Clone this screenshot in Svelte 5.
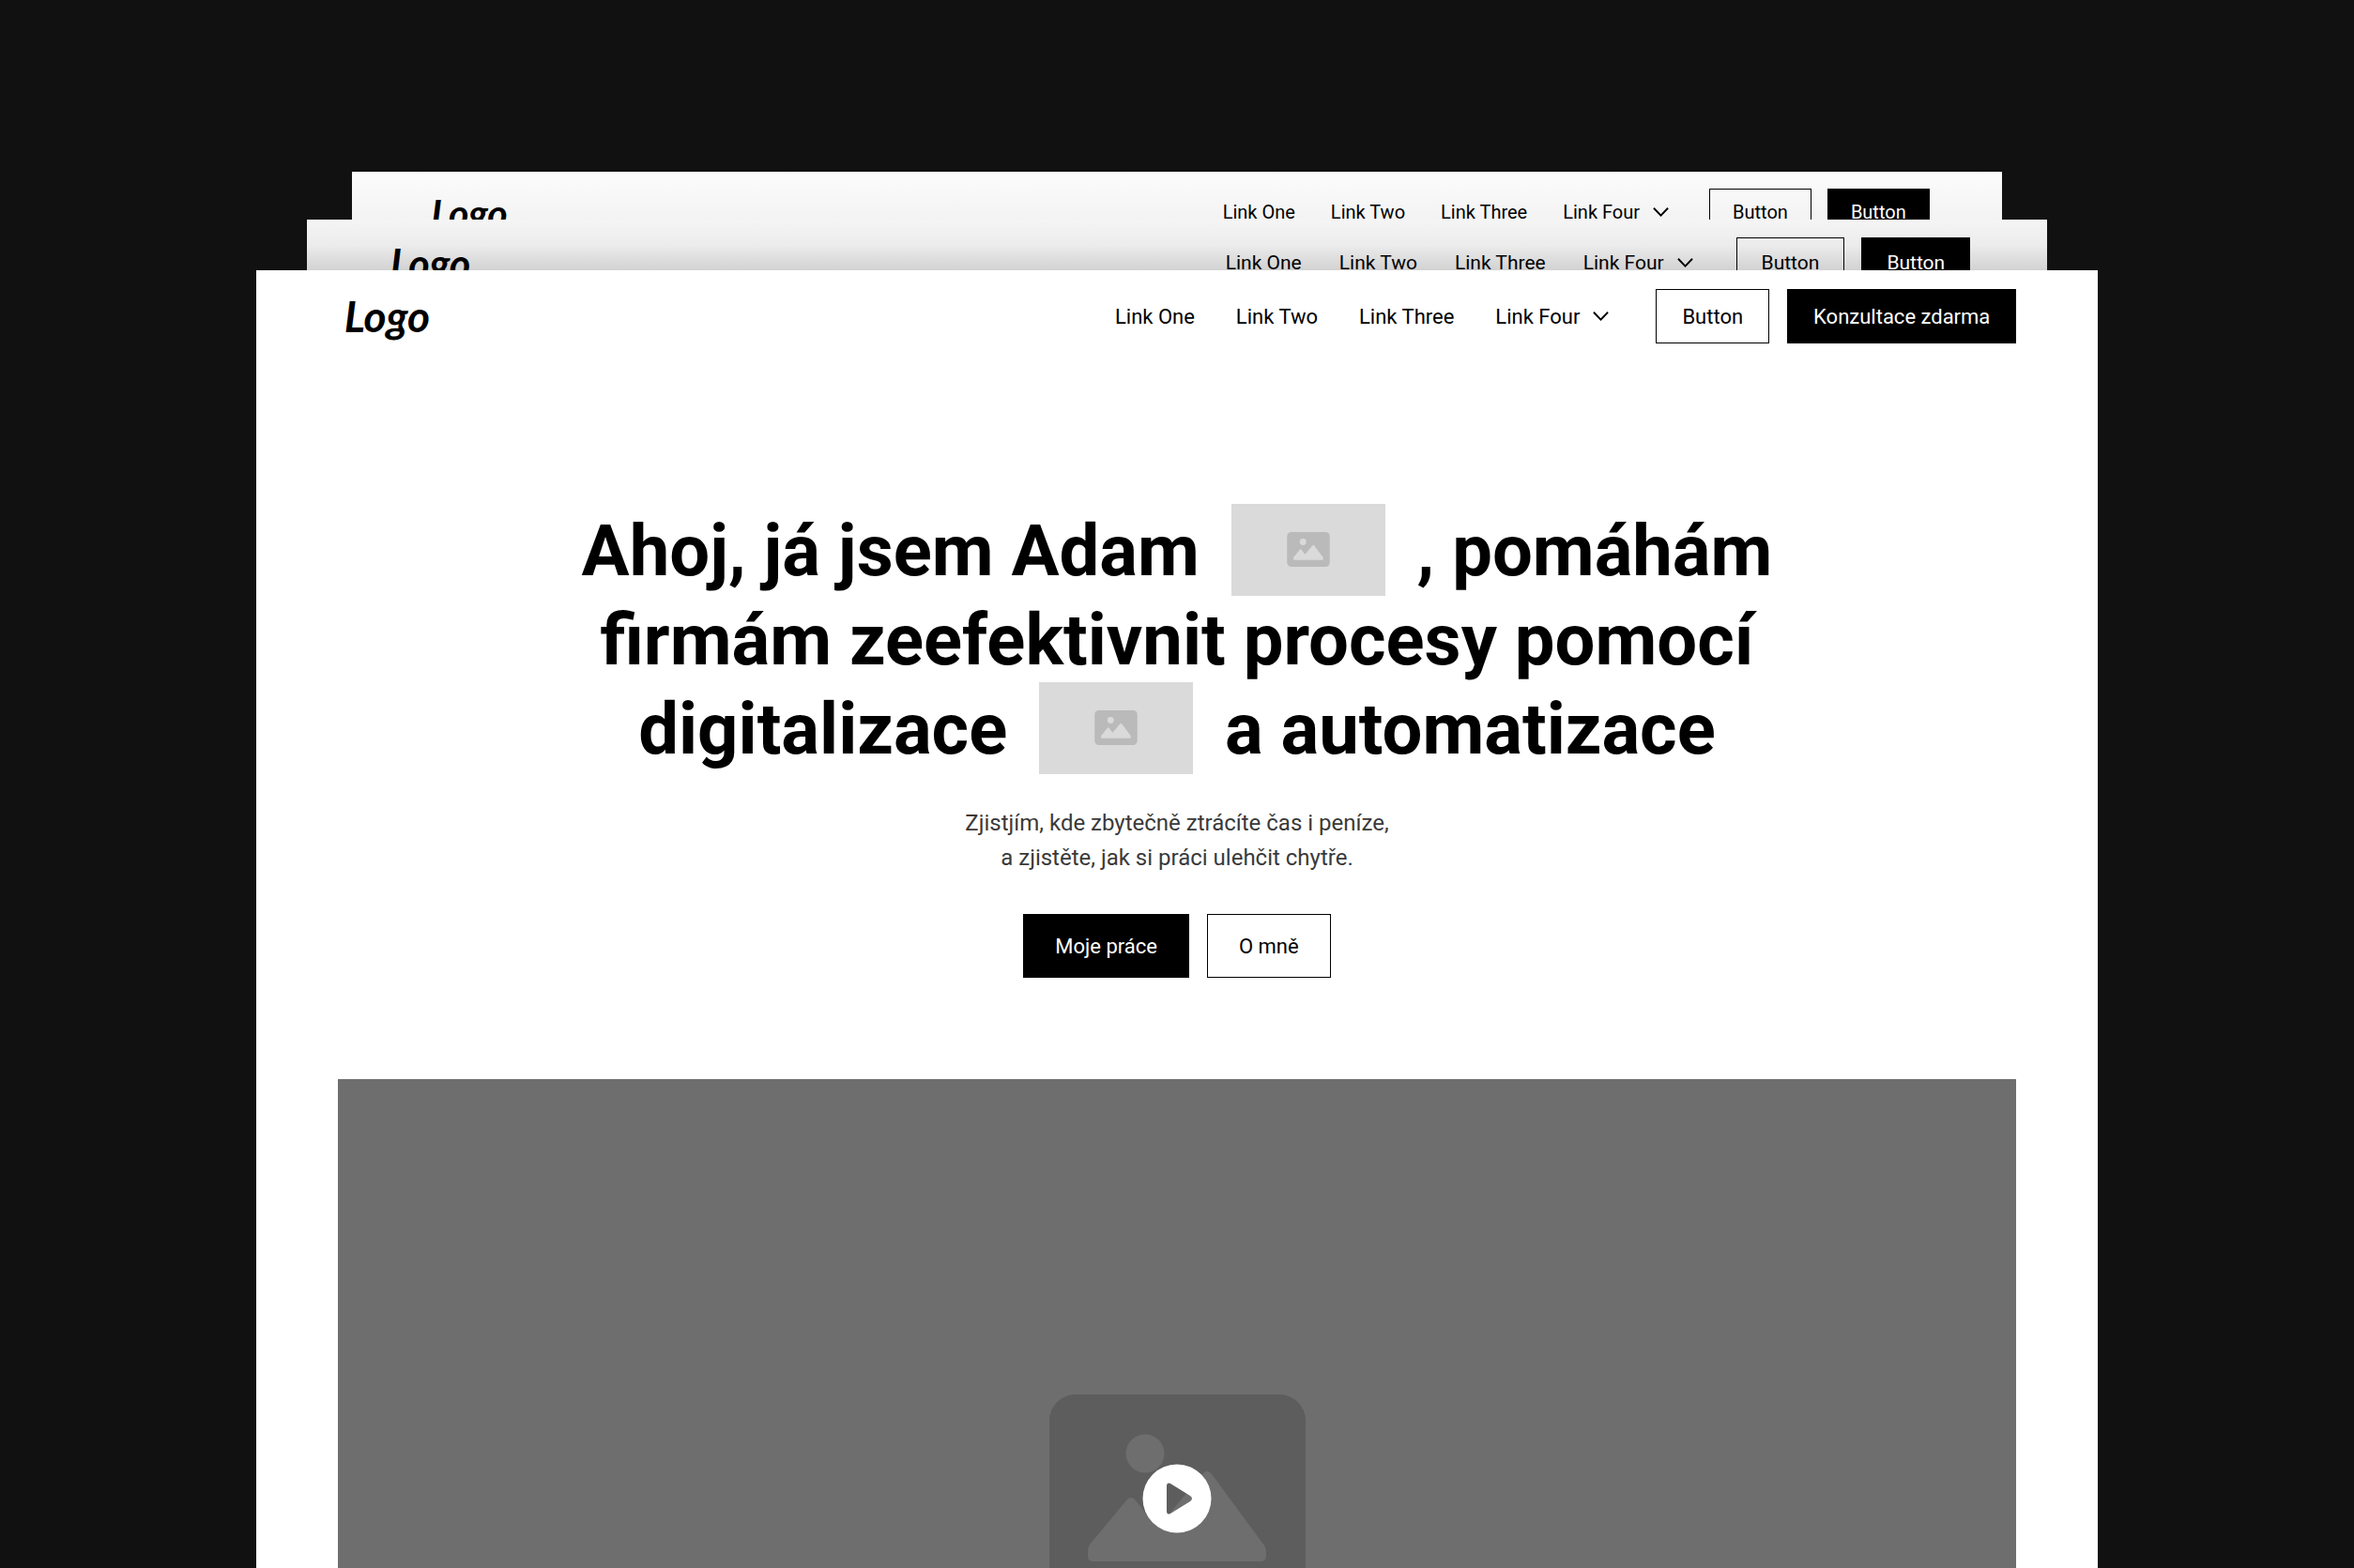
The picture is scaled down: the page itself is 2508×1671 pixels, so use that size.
<script>
    const links = ['Link One', 'Link Two', 'Link Three'];

    const backSheets = [
        { name: 'sheet-back', action: 'Button' },
        { name: 'sheet-middle', action: 'Button' }
    ];
</script>

{#snippet navbar(action)}
    <header class="navbar">
        <a href="#home" class="logo">Logo</a>

        <div class="navbar-menu">
            <nav class="nav-links">
                {#each links as link}
                    <a href="#link" class="nav-link">{link}</a>
                {/each}
                <button type="button" class="nav-link nav-dropdown">
                    Link Four
                    <svg class="chevron" viewBox="0 0 18 12" fill="none" aria-hidden="true">
                        <path d="M1 1.5 L9 9.8 L17 1.5" stroke="currentColor" stroke-width="2" />
                    </svg>
                </button>
            </nav>

            <div class="nav-actions">
                <button type="button" class="button">Button</button>
                <button type="button" class="button button-primary">{action}</button>
            </div>
        </div>
    </header>
{/snippet}

{#snippet placeholder()}
    <svg viewBox="0 0 273 222" aria-hidden="true">
        <rect class="frame" width="273" height="222" rx="28" />
        <circle class="shape" cx="102" cy="63" r="20.5" />
        <path
            class="shape"
            d="M41 166 Q41 163 43 160 L82 113 Q87 107 92 113 L112 139 Q115 143 118 139 L163 85 Q168 79 173 85 L229 161 Q231 164 231 167 V172 Q231 178 225 178 H47 Q41 178 41 172 Z"
        />
    </svg>
{/snippet}

<div class="page">
    {#each backSheets as sheet}
        <div class="sheet {sheet.name}">
            {@render navbar(sheet.action)}
        </div>
    {/each}

    <div class="sheet sheet-front">
        {@render navbar('Konzultace zdarma')}

        <main class="hero">
            <h1 class="hero-title">
                Ahoj, já jsem Adam <span class="inline-image">{@render placeholder()}</span> , pomáhám<br />
                firmám zeefektivnit procesy pomocí<br />
                digitalizace <span class="inline-image">{@render placeholder()}</span> a automatizace
            </h1>

            <p class="hero-text">
                Zjistjím, kde zbytečně ztrácíte čas i peníze,<br />
                a zjistěte, jak si práci ulehčit chytře.
            </p>

            <div class="hero-actions">
                <button type="button" class="button button-primary">Moje práce</button>
                <button type="button" class="button">O mně</button>
            </div>

            <div class="video">
                <div class="video-image">{@render placeholder()}</div>
                <button type="button" class="play" aria-label="Play video">
                    <svg viewBox="0 0 74 74" aria-hidden="true">
                        <path
                            fill="#fff"
                            fill-rule="evenodd"
                            d="M37 0.5 A36.5 36.5 0 1 1 37 73.5 A36.5 36.5 0 1 1 37 0.5 Z M26 24 V50 Q26 55 30 53 L51 40 Q55 37 51 34 L30 21 Q26 19 26 24 Z"
                        />
                    </svg>
                </button>
            </div>
        </main>
    </div>
</div>

<style>
    :global(body) {
        margin: 0;
        background: #111;
    }

    .page {
        box-sizing: border-box;
        display: flex;
        flex-direction: column;
        align-items: center;
        height: 100vh;
        padding-top: 183px;
        overflow: hidden;
        background: #111;
        color: #000;
        font-family: Roboto, "Liberation Sans", sans-serif;
    }

    /* Stacked sheets */
    .sheet {
        flex-shrink: 0;
        overflow: hidden;
    }

    .sheet-back {
        --text: 20px;
        --logo: 41px;
        --bar: 86px;
        --control: 51px;
        --pad: 24px;
        --link-gap: 38px;
        --menu-gap: 43px;
        --action-gap: 17px;
        width: 70.1%;
        height: 51px;
        background: linear-gradient(#fcfcfc, #f3f3f3);
    }

    .sheet-middle {
        --text: 21px;
        --logo: 43px;
        --bar: 92px;
        --control: 54px;
        --pad: 26px;
        --link-gap: 40px;
        --menu-gap: 46px;
        --action-gap: 18px;
        width: 73.9%;
        height: 54px;
        background: linear-gradient(#f5f5f5, #ececec 50%, #d2d2d2);
    }

    .sheet-front {
        --text: 22px;
        --logo: 46px;
        --bar: 98px;
        --control: 58px;
        --pad: 27px;
        --link-gap: 44px;
        --menu-gap: 50px;
        --action-gap: 19px;
        width: 78.2%;
        background: #fff;
    }

    /* Navbar */
    .navbar {
        box-sizing: border-box;
        display: flex;
        align-items: center;
        justify-content: space-between;
        height: var(--bar);
        padding: 0 4.4%;
    }

    .logo {
        padding-left: 7px;
        color: #000;
        font-family: Lato, sans-serif;
        font-size: var(--logo);
        font-style: italic;
        font-weight: 700;
        line-height: 1;
        text-decoration: none;
    }

    .navbar-menu {
        display: flex;
        align-items: center;
        gap: var(--menu-gap);
    }

    .nav-links {
        display: flex;
        align-items: center;
        gap: var(--link-gap);
    }

    .nav-link {
        color: #000;
        font-size: var(--text);
        text-decoration: none;
        white-space: nowrap;
    }

    .nav-dropdown {
        display: flex;
        align-items: center;
        gap: 14px;
        padding: 0;
        border: none;
        background: none;
        font-family: inherit;
    }

    .chevron {
        width: 17px;
        height: 12px;
    }

    .nav-actions {
        display: flex;
        gap: var(--action-gap);
    }

    .button {
        box-sizing: border-box;
        height: var(--control);
        padding: 0 var(--pad);
        border: 1px solid #000;
        background: transparent;
        color: #000;
        font-family: inherit;
        font-size: var(--text);
        white-space: nowrap;
        cursor: pointer;
    }

    .button-primary {
        background: #000;
        color: #fff;
    }

    /* Hero */
    .hero {
        padding: 154px 4.4% 0;
        text-align: center;
    }

    .hero-title {
        margin: 0;
        font-size: 76px;
        font-weight: 700;
        line-height: 95px;
    }

    .inline-image {
        box-sizing: border-box;
        display: inline-block;
        width: 164px;
        height: 98px;
        margin: -4px 15px;
        padding: 30px 59px;
        overflow: hidden;
        background: #dadada;
        vertical-align: -18px;
    }

    .inline-image svg {
        display: block;
        width: 46px;
        height: 37px;
    }

    .inline-image .frame {
        fill: #bababa;
    }

    .inline-image .shape {
        fill: #dadada;
    }

    .hero-text {
        margin: 34px 0 41px;
        color: #3a3a3a;
        font-size: 24px;
        line-height: 37px;
    }

    .hero-actions {
        --control: 68px;
        --pad: 33px;
        display: flex;
        justify-content: center;
        gap: 19px;
        margin-bottom: 108px;
    }

    /* Video */
    .video {
        display: grid;
        place-items: center;
        aspect-ratio: 2 / 1;
        background: #6e6e6e;
    }

    .video-image,
    .play {
        grid-area: 1 / 1;
    }

    .video-image svg {
        display: block;
        width: 273px;
        height: 222px;
    }

    .video-image .frame {
        fill: #5d5d5d;
    }

    .video-image .shape {
        fill: #6e6e6e;
    }

    .play {
        padding: 0;
        border: none;
        background: none;
        cursor: pointer;
    }

    .play svg {
        display: block;
        width: 74px;
        height: 74px;
    }
</style>
